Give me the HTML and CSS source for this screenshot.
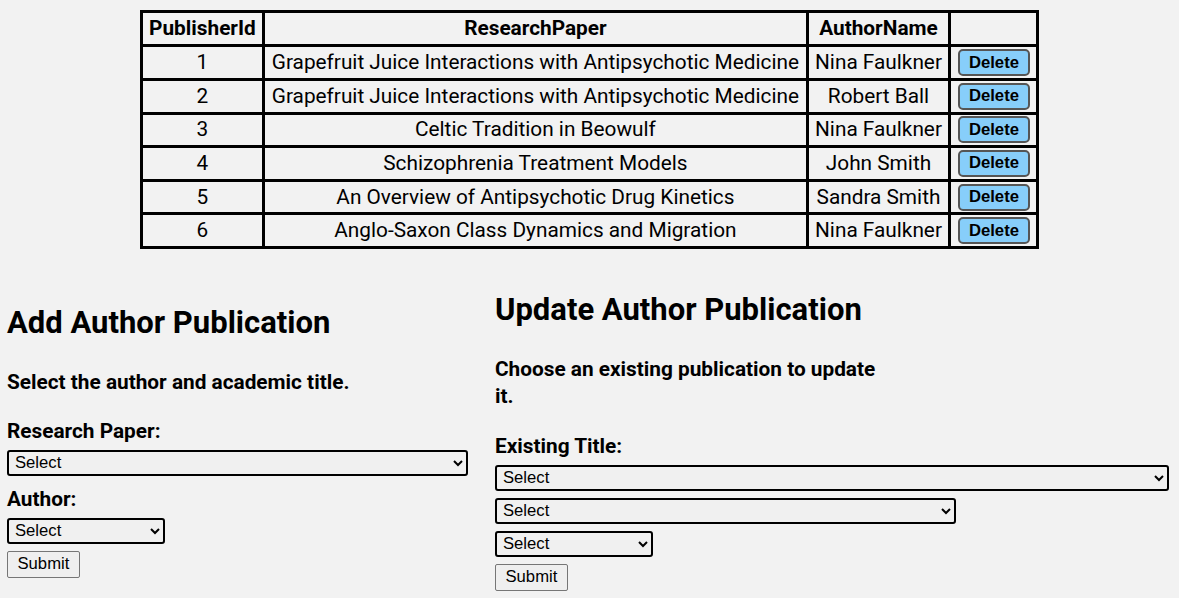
FILE: index.html
```html
<!DOCTYPE html>
<html>
<head>
<meta charset="utf-8">
<link rel="stylesheet" href="styles.css">
</head>
<body>
<table class="pubs">
  <thead>
    <tr><th>PublisherId</th><th>ResearchPaper</th><th>AuthorName</th><th></th></tr>
  </thead>
  <tbody>
    <tr><td>1</td><td>Grapefruit Juice Interactions with Antipsychotic Medicine</td><td>Nina Faulkner</td><td><button class="del">Delete</button></td></tr>
    <tr><td>2</td><td>Grapefruit Juice Interactions with Antipsychotic Medicine</td><td>Robert Ball</td><td><button class="del">Delete</button></td></tr>
    <tr><td>3</td><td>Celtic Tradition in Beowulf</td><td>Nina Faulkner</td><td><button class="del">Delete</button></td></tr>
    <tr><td>4</td><td>Schizophrenia Treatment Models</td><td>John Smith</td><td><button class="del">Delete</button></td></tr>
    <tr><td>5</td><td>An Overview of Antipsychotic Drug Kinetics</td><td>Sandra Smith</td><td><button class="del">Delete</button></td></tr>
    <tr><td>6</td><td>Anglo-Saxon Class Dynamics and Migration</td><td>Nina Faulkner</td><td><button class="del">Delete</button></td></tr>
  </tbody>
</table>

<div class="forms">
  <section class="col col-add">
    <h1 class="title">Add Author Publication</h1>
    <p class="lead">Select the author and academic title.</p>
    <label class="lbl">Research Paper:</label>
    <select class="sel sel-wide"><option>Select</option></select>
    <label class="lbl lbl-author">Author:</label>
    <select class="sel sel-small"><option>Select</option></select>
    <button class="submit">Submit</button>
  </section>
  <section class="col col-update">
    <h1 class="title">Update Author Publication</h1>
    <p class="lead lead-narrow">Choose an existing publication to update it.</p>
    <label class="lbl">Existing Title:</label>
    <select class="sel sel-full"><option>Select</option></select>
    <select class="sel sel-mid"><option>Select</option></select>
    <select class="sel sel-small"><option>Select</option></select>
    <button class="submit">Submit</button>
  </section>
</div>
</body>
</html>
```
FILE: styles.css
```css
html, body {
  margin: 0;
  padding: 0;
  background: #f2f2f2;
}
body {
  font-family: Roboto, "Liberation Sans", sans-serif;
  font-size: 20.8px;
  color: #000;
  padding-top: 10px;
}
.pubs {
  margin: 0 auto;
  border-collapse: collapse;
  border: 3px solid #000;
}
.pubs th, .pubs td {
  border: 3px solid #000;
  padding: 1.8px 6.5px;
  line-height: 27px;
  text-align: center;
}
.pubs th {
  font-weight: 700;
  padding: 2.4px 6.5px 2px;
}
.del {
  font-family: "Liberation Sans", Arial, sans-serif;
  font-weight: 700;
  font-size: 16.67px;
  background: #87cefa;
  border: 2px solid #555;
  border-radius: 5px;
  padding: 0 9px;
  height: 27px;
  color: #000;
  vertical-align: top;
}
.forms {
  display: flex;
  padding: 0 10px 0 7px;
  gap: 25px;
}
.col {
  display: flex;
  flex-direction: column;
  align-items: flex-start;
}
.col-add {
  width: 463px;
  padding-top: 56px;
}
.col-update {
  flex: 1;
  padding-top: 43px;
}
.title {
  font-size: 31px;
  font-weight: 700;
  margin: 0;
  line-height: 36px;
}
.lead {
  font-size: 20.8px;
  font-weight: 700;
  margin: 28px 0 0;
  line-height: 27px;
}
.lead-narrow { max-width: 385px; }
.lbl {
  font-size: 20.8px;
  font-weight: 700;
  line-height: 27px;
  display: block;
  margin-top: 22px;
}
.col-update .lbl { margin-top: 23px; }
.col-add .lbl-author { margin-top: 10px; }
.sel {
  font-family: "Liberation Sans", Arial, sans-serif;
  font-size: 16.67px;
  height: 26px;
  border: 2px solid #000;
  border-radius: 3px;
  background: #f0f0f0;
  color: #000;
  padding: 0 2px;
  margin-top: 5px;
}
.col-update .sel + .sel { margin-top: 7px; }
.sel-wide { width: 461px; }
.sel-full { width: 100%; }
.sel-mid { width: 461px; }
.sel-small { width: 158px; }
.submit {
  font-family: "Liberation Sans", Arial, sans-serif;
  font-size: 16.67px;
  margin-top: 7px;
  padding: 1px 9.5px;
  height: 27px;
  background: #efefef;
  border: 1px solid #767676;
  border-radius: 2px;
  color: #000;
}
```
